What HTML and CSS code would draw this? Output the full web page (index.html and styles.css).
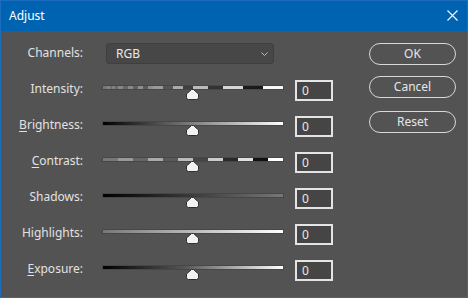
FILE: index.html
```html
<!DOCTYPE html>
<html lang="en">

<head>
    <meta charset="UTF-8">
    <title>Adjust</title>
    <link rel="stylesheet" href="styles.css">
</head>

<body>
    <div class="window">
        <div class="titlebar">
            <span class="title">Adjust</span>
            <svg class="close" width="11" height="11" viewBox="0 0 11 11">
                <path d="M0.5 0.5 L10.5 10.5 M10.5 0.5 L0.5 10.5" stroke="#fff" stroke-width="1.1" fill="none" />
            </svg>
        </div>

        <div class="content">
            <div class="fields">
                <div class="row channel-row">
                    <span class="label">Channels:</span>
                    <div class="select">
                        <span>RGB</span>
                        <svg width="7" height="4" viewBox="0 0 7 4">
                            <path d="M0.5 0.5 L3.5 3.5 L6.5 0.5" stroke="#bdbdbd" fill="none" />
                        </svg>
                    </div>
                </div>

                <div class="row">
                    <span class="label">Intensity:</span>
                    <div class="slider">
                        <div class="track intensity"></div>
                        <svg class="thumb" width="13" height="11" viewBox="0 0 13 11">
                            <path d="M5.5 0.5 H7.5 L12.5 5 V8.5 Q12.5 10.5 10.5 10.5 H2.5 Q0.5 10.5 0.5 8.5 V5 Z" fill="#f2f2f2" stroke="#2e2e2e" />
                        </svg>
                    </div>
                    <div class="num">0</div>
                </div>

                <div class="row">
                    <span class="label"><u>B</u>rightness:</span>
                    <div class="slider">
                        <div class="track brightness"></div>
                        <svg class="thumb" width="13" height="11" viewBox="0 0 13 11">
                            <path d="M5.5 0.5 H7.5 L12.5 5 V8.5 Q12.5 10.5 10.5 10.5 H2.5 Q0.5 10.5 0.5 8.5 V5 Z" fill="#f2f2f2" stroke="#2e2e2e" />
                        </svg>
                    </div>
                    <div class="num">0</div>
                </div>

                <div class="row">
                    <span class="label"><u>C</u>ontrast:</span>
                    <div class="slider">
                        <div class="track contrast"></div>
                        <svg class="thumb" width="13" height="11" viewBox="0 0 13 11">
                            <path d="M5.5 0.5 H7.5 L12.5 5 V8.5 Q12.5 10.5 10.5 10.5 H2.5 Q0.5 10.5 0.5 8.5 V5 Z" fill="#f2f2f2" stroke="#2e2e2e" />
                        </svg>
                    </div>
                    <div class="num">0</div>
                </div>

                <div class="row">
                    <span class="label">Shadows:</span>
                    <div class="slider">
                        <div class="track shadows"></div>
                        <svg class="thumb" width="13" height="11" viewBox="0 0 13 11">
                            <path d="M5.5 0.5 H7.5 L12.5 5 V8.5 Q12.5 10.5 10.5 10.5 H2.5 Q0.5 10.5 0.5 8.5 V5 Z" fill="#f2f2f2" stroke="#2e2e2e" />
                        </svg>
                    </div>
                    <div class="num">0</div>
                </div>

                <div class="row">
                    <span class="label">Highlights:</span>
                    <div class="slider">
                        <div class="track highlights"></div>
                        <svg class="thumb" width="13" height="11" viewBox="0 0 13 11">
                            <path d="M5.5 0.5 H7.5 L12.5 5 V8.5 Q12.5 10.5 10.5 10.5 H2.5 Q0.5 10.5 0.5 8.5 V5 Z" fill="#f2f2f2" stroke="#2e2e2e" />
                        </svg>
                    </div>
                    <div class="num">0</div>
                </div>

                <div class="row">
                    <span class="label"><u>E</u>xposure:</span>
                    <div class="slider">
                        <div class="track exposure"></div>
                        <svg class="thumb" width="13" height="11" viewBox="0 0 13 11">
                            <path d="M5.5 0.5 H7.5 L12.5 5 V8.5 Q12.5 10.5 10.5 10.5 H2.5 Q0.5 10.5 0.5 8.5 V5 Z" fill="#f2f2f2" stroke="#2e2e2e" />
                        </svg>
                    </div>
                    <div class="num">0</div>
                </div>
            </div>

            <div class="buttons">
                <button class="ok">OK</button>
                <button class="cancel">Cancel</button>
                <button class="reset">Reset</button>
            </div>
        </div>
    </div>
</body>

</html>
```

FILE: styles.css
```css
body {
    margin: 0;
    padding: 0;
    font-family: "Noto Sans", "Open Sans", sans-serif;
    font-size: 12px;
    color: #e2e2e2;
    background-color: #535353;
}

.window {
    width: 468px;
    height: 298px;
    box-sizing: border-box;
    border: 1px solid #1c6dbd;
    background-color: #535353;
}

.titlebar {
    height: 30px;
    background-color: #0063b1;
    display: flex;
    align-items: center;
    justify-content: space-between;
    padding: 0 9px 0 8px;
    color: #fff;
}

.title {
    font-size: 12px;
    margin-top: -1px;
}

.close {
    display: block;
    margin-top: -1px;
}

.content {
    display: flex;
    padding-top: 12px;
}

.fields {
    display: flex;
    flex-direction: column;
    gap: 15px;
}

.row {
    display: flex;
    align-items: flex-start;
    height: 21px;
}

.channel-row {
    margin-bottom: 1px;
}

.label {
    width: 82px;
    text-align: right;
    line-height: 18px;
    flex-shrink: 0;
}

.channel-row .label {
    line-height: 20px;
}

.label u {
    text-underline-offset: 2px;
}

.select {
    margin-left: 23px;
    width: 168px;
    height: 21px;
    box-sizing: border-box;
    border: 1px solid #3f3f3f;
    border-radius: 3px;
    background-color: #474747;
    display: flex;
    align-items: center;
    justify-content: space-between;
    padding: 0 5px 0 9px;
    color: #eaeaea;
}

.select svg {
    display: block;
}

.slider {
    position: relative;
    margin-left: 20px;
    width: 180px;
    height: 21px;
}

.track {
    margin-top: 6px;
    height: 3px;
    box-shadow: 0 0 0 1px #474747;
}

.thumb {
    position: absolute;
    top: 9px;
    left: 83px;
    display: block;
}

.intensity {
    background: linear-gradient(to right,
            #777 0 4px, #858585 4px 7px, #6e6e6e 7px 9px, #808080 9px 12px,
            #6a6a6a 12px 15px, #888 15px 20px, #666 20px 25px, #8a8a8a 25px 30px,
            #606060 30px 35px, #8e8e8e 35px 40px, #5a5a5a 40px 45px, #8f8f8f 45px 50px,
            #575757 50px 50px, #9a9a9a 50px 60px, #555 60px 70px, #aaa 70px 80px,
            #404040 80px 90px, #bbb 90px 105px, #333 105px 120px, #d6d6d6 120px 140px,
            #1a1a1a 140px 160px, #f8f8f8 160px 180px);
}

.contrast {
    background: linear-gradient(to right,
            #777 0 15px, #999 15px 30px, #666 30px 45px, #aaa 45px 60px,
            #5a5a5a 60px 75px, #bbb 75px 90px, #444 90px 105px, #ccc 105px 120px,
            #2a2a2a 120px 135px, #e0e0e0 135px 150px, #111 150px 165px, #fff 165px 180px);
}

.brightness {
    background: linear-gradient(to right, #000, #fff);
}

.shadows {
    background: linear-gradient(to right, #000, #777);
}

.highlights {
    background: linear-gradient(to right, #777, #fff);
}

.exposure {
    background: linear-gradient(to right, #000, #555 45%, #fff);
}

.num {
    margin-left: 12px;
    width: 38px;
    height: 21px;
    box-sizing: border-box;
    border: 2px solid #e4e4e4;
    background-color: #454545;
    padding-left: 5px;
    line-height: 17px;
    color: #e8e8e8;
}

.buttons {
    margin-left: 36px;
    display: flex;
    flex-direction: column;
}

button {
    width: 87px;
    height: 22px;
    box-sizing: border-box;
    border: 1px solid #d8d8d8;
    border-radius: 11px;
    background-color: transparent;
    color: #e6e6e6;
    font-family: "Noto Sans", "Open Sans", sans-serif;
    font-size: 12px;
    padding: 0;
    line-height: 18px;
}

.cancel {
    margin-top: 11px;
}

.reset {
    margin-top: 13px;
}
```
